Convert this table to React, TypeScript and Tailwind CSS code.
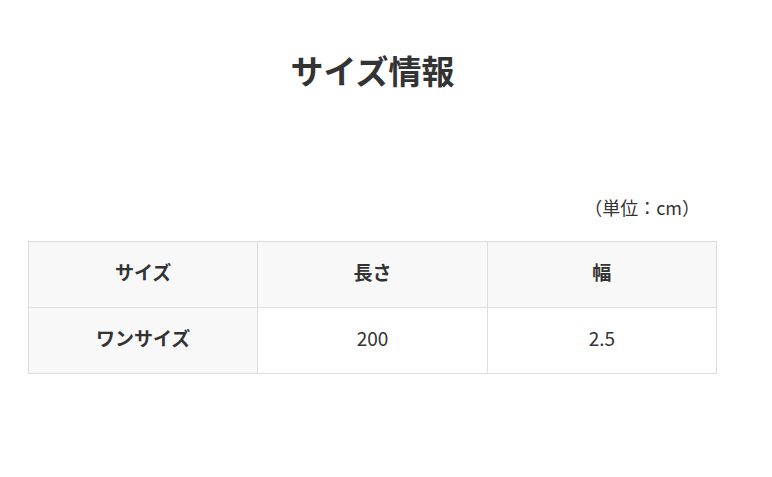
export default function App() {
  const font = { fontFamily: '"Noto Sans CJK JP", "Noto Sans", sans-serif' }
  return (
    <div className="min-h-screen bg-white text-[#333]" style={font}>
      <div className="ml-[28px] w-[689px] pt-[46px]">
        <h2 className="text-center text-[33px] font-bold leading-[48px]">サイズ情報</h2>
        <p className="mt-[99px] pr-[17px] text-right text-[18px] leading-[28px]">（単位：cm）</p>
        <table className="mt-[20px] w-full table-fixed border-collapse text-[19px]">
          <tbody>
            <tr className="h-[66px] bg-[#f8f8f8]">
              <th className="border border-[#ddd] pb-[5px] font-bold">サイズ</th>
              <th className="border border-[#ddd] pb-[5px] font-bold">長さ</th>
              <th className="border border-[#ddd] pb-[5px] font-bold">幅</th>
            </tr>
            <tr className="h-[66px]">
              <th className="border border-[#ddd] bg-[#f8f8f8] pb-[5px] font-bold">ワンサイズ</th>
              <td className="border border-[#ddd] pb-[5px] text-center">200</td>
              <td className="border border-[#ddd] pb-[5px] text-center">2.5</td>
            </tr>
          </tbody>
        </table>
      </div>
    </div>
  )
}
